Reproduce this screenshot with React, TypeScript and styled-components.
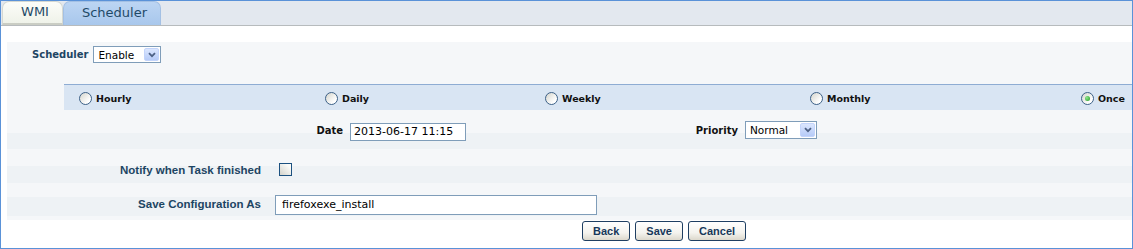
import styled, { createGlobalStyle } from "styled-components";

const GlobalStyle = createGlobalStyle`
  html, body {
    margin: 0;
    padding: 0;
    background: #fff;
  }
  body {
    font-family: "DejaVu Sans", Verdana, sans-serif;
  }
`;

const Frame = styled.div`
  width: 1133px;
  height: 249px;
  box-sizing: border-box;
  border: 1px solid #5a92d8;
  background: #fff;
  overflow: hidden;
`;

const TabStrip = styled.div`
  display: flex;
  align-items: flex-end;
  height: 24px;
  padding-left: 1px;
  background: #e3e8ef;
  border-bottom: 1px solid #b7bbbd;
`;

const Tab = styled.div<{ $active?: boolean; $width: number }>`
  width: ${({ $width }) => $width}px;
  height: 24px;
  box-sizing: border-box;
  display: flex;
  align-items: center;
  justify-content: center;
  padding: 0 0 3px 5px;
  font-size: 13px;
  color: #1f4a68;
  cursor: pointer;
  border-radius: 7px 7px 0 0;
  border: 1px solid ${({ $active }) => ($active ? "#a3c0e4" : "#d5d8d2")};
  border-bottom: ${({ $active }) => ($active ? "none" : "2px solid #cacdc4")};
  background: ${({ $active }) =>
    $active
      ? "linear-gradient(#bcd5f3, #a8c7ec)"
      : "linear-gradient(#fcfdf9, #eff2e9)"};
`;

const Body = styled.div`
  padding: 16px 0 0 6px;
`;

const Panel = styled.div`
  background: #f5f7f9;
`;

const SchedulerRow = styled.div`
  display: flex;
  align-items: center;
  gap: 5px;
  padding: 4px 0 21px 25px;
`;

const TealLabel = styled.label`
  font-weight: bold;
  font-size: 10px;
  color: #1d4563;
`;

const PlainLabel = styled.label`
  font-weight: bold;
  font-size: 10px;
  color: #111;
  white-space: nowrap;
`;

const SelectFrame = styled.div<{ $width: number; $height: number }>`
  display: flex;
  align-items: stretch;
  width: ${({ $width }) => $width}px;
  height: ${({ $height }) => $height}px;
  box-sizing: border-box;
  padding: 1px;
  border: 1px solid #7f9db9;
  background: #fff;
`;

const NativeSelect = styled.select`
  flex: 1;
  min-width: 0;
  appearance: none;
  border: none;
  outline: none;
  background: transparent;
  padding: 0 0 0 3px;
  margin: 0;
  font-family: "DejaVu Sans", Verdana, sans-serif;
  font-size: 10.5px;
  color: #000;
`;

const DropButton = styled.span`
  width: 15px;
  display: flex;
  align-items: center;
  justify-content: center;
  border-radius: 2px;
  background: linear-gradient(#dbe6fe, #b6cbf8);
  border: 1px solid #c3d4fb;
  box-sizing: border-box;
`;

const RadioRow = styled.div`
  margin-left: 57px;
  height: 25px;
  border-top: 1px solid #8eacd3;
  background: #d9e5f3;
  display: grid;
  grid-template-columns: 246px 220px 265px 271px 1fr;
  align-items: center;
  padding-left: 15px;
`;

const RadioOption = styled.label`
  display: flex;
  align-items: center;
  gap: 4px;
  padding-top: 1px;
  font-weight: bold;
  font-size: 9.5px;
  color: #111;
`;

const Radio = styled.input.attrs({ type: "radio" })`
  appearance: none;
  margin: 0;
  width: 13px;
  height: 13px;
  box-sizing: border-box;
  border: 1px solid #3d6187;
  border-radius: 50%;
  background: linear-gradient(135deg, #d4d4cc, #ffffff 75%);
  display: grid;
  place-content: center;
  &:checked::after {
    content: "";
    width: 5px;
    height: 5px;
    border-radius: 50%;
    background: radial-gradient(circle at 35% 35%, #8ee68e, #1f9a1f);
  }
`;

const StripedRow = styled.div<{ $height: number; $split: number; $tail?: number }>`
  height: ${({ $height }) => $height}px;
  box-sizing: border-box;
  display: grid;
  align-items: center;
  align-content: start;
  background: ${({ $split, $tail }) =>
    `linear-gradient(#f5f7f9 0, #f5f7f9 ${$split}px, #eef2f5 ${$split}px, #eef2f5 ${
      $tail ?? 999
    }px, #f5f7f9 ${$tail ?? 999}px)`};
`;

const DateRow = styled(StripedRow)`
  grid-template-columns: 336px 330px 51px auto;
  column-gap: 7px;
  padding-top: 10px;
`;

const FormRow = styled(StripedRow)<{ $top: number }>`
  grid-template-columns: 254px 1fr;
  column-gap: 14px;
  padding-top: ${({ $top }) => $top}px;
`;

const RightCell = styled.div`
  display: flex;
  justify-content: flex-end;
  align-items: center;
`;

const FormLabel = styled.label`
  font-family: "Liberation Sans", Arial, sans-serif;
  font-weight: bold;
  font-size: 11.5px;
  color: #1d4563;
  text-align: right;
  white-space: nowrap;
`;

const TextInput = styled.input<{ $width: number; $height: number; $pad: number }>`
  width: ${({ $width }) => $width}px;
  height: ${({ $height }) => $height}px;
  box-sizing: border-box;
  margin: 0;
  padding: 0 ${({ $pad }) => $pad}px;
  border: 1px solid #7f9db9;
  outline: none;
  background: #fff;
  font-family: "DejaVu Sans", Verdana, sans-serif;
  font-size: 11px;
  color: #000;
`;

const CheckBox = styled.input.attrs({ type: "checkbox" })`
  appearance: none;
  display: block;
  margin: 0 0 0 4px;
  width: 13px;
  height: 13px;
  box-sizing: border-box;
  border: 1px solid #1c5180;
  background: linear-gradient(45deg, #d3d3cb, #fbfbf8 80%);
`;

const ButtonBar = styled.div`
  display: flex;
  gap: 5px;
  margin-top: 1px;
  padding-left: 575px;
`;

const Button = styled.button`
  height: 20px;
  padding: 0 10px;
  margin: 0;
  border: 1px solid #1f3f62;
  border-radius: 3px;
  background: linear-gradient(#ffffff 0%, #f4f3ee 60%, #dcd8cc 100%);
  font-family: "Liberation Sans", Arial, sans-serif;
  font-weight: bold;
  font-size: 11px;
  color: #17385a;
  cursor: pointer;
`;

const Chevron = () => (
  <svg width="8" height="6" viewBox="0 0 8 6">
    <path d="M1 1.2 L4 4.2 L7 1.2" fill="none" stroke="#4d6185" strokeWidth="1.8" />
  </svg>
);

type SelectProps = { value: string; options: string[]; width: number; height: number };

const Select = ({ value, options, width, height }: SelectProps) => (
  <SelectFrame $width={width} $height={height}>
    <NativeSelect defaultValue={value}>
      {options.map((o) => (
        <option key={o}>{o}</option>
      ))}
    </NativeSelect>
    <DropButton>
      <Chevron />
    </DropButton>
  </SelectFrame>
);

const frequencies = ["Hourly", "Daily", "Weekly", "Monthly", "Once"];

export default function App() {
  return (
    <>
      <GlobalStyle />
      <Frame>
        <TabStrip>
          <Tab $width={61}>WMI</Tab>
          <Tab $width={98} $active>
            Scheduler
          </Tab>
        </TabStrip>
        <Body>
          <Panel>
            <SchedulerRow>
              <TealLabel>Scheduler</TealLabel>
              <Select value="Enable" options={["Enable", "Disable"]} width={68} height={17} />
            </SchedulerRow>
            <RadioRow>
              {frequencies.map((f) => (
                <RadioOption key={f}>
                  <Radio name="frequency" defaultChecked={f === "Once"} />
                  {f}
                </RadioOption>
              ))}
            </RadioRow>
            <DateRow $height={39} $split={23}>
              <RightCell>
                <PlainLabel>Date</PlainLabel>
              </RightCell>
              <div>
                <TextInput $width={116} $height={18} $pad={3} defaultValue="2013-06-17 11:15" />
              </div>
              <RightCell>
                <PlainLabel>Priority</PlainLabel>
              </RightCell>
              <Select value="Normal" options={["Low", "Normal", "High"]} width={72} height={18} />
            </DateRow>
            <FormRow $height={34} $split={17} $top={14}>
              <RightCell>
                <FormLabel>Notify when Task finished</FormLabel>
              </RightCell>
              <div>
                <CheckBox />
              </div>
            </FormRow>
            <FormRow $height={37} $split={14} $tail={33} $top={10}>
              <RightCell>
                <FormLabel>Save Configuration As</FormLabel>
              </RightCell>
              <div>
                <TextInput $width={322} $height={20} $pad={6} defaultValue="firefoxexe_install" />
              </div>
            </FormRow>
          </Panel>
          <ButtonBar>
            <Button>Back</Button>
            <Button>Save</Button>
            <Button>Cancel</Button>
          </ButtonBar>
        </Body>
      </Frame>
    </>
  );
}
